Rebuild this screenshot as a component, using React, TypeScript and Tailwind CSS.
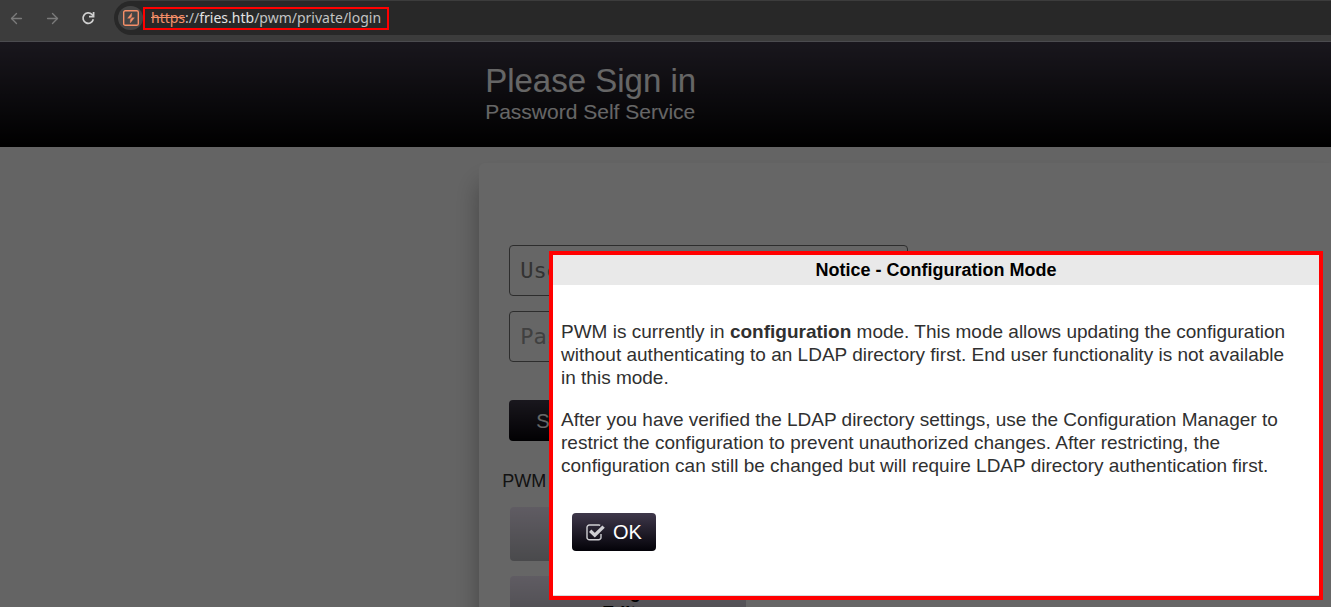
import { FaRegEdit, FaSignInAlt, FaCog } from "react-icons/fa";
import { ArrowLeft, ArrowRight } from "lucide-react";

const configLinks = [
  { label: "Configuration Manager", icon: FaCog },
  { label: "Configuration Editor", icon: FaRegEdit },
];

function BrowserBar() {
  return (
    <div className="h-[42px] bg-[#3c3c3c] border-b border-[#4b4b4f] flex items-start pl-2 pt-px">
      <div className="flex items-center h-[34px] gap-5 shrink-0">
        <button aria-label="Back" className="w-4 h-4 text-[#7b7b7b]">
          <ArrowLeft size={17} strokeWidth={1.9} />
        </button>
        <button aria-label="Forward" className="w-4 h-4 text-[#7b7b7b]">
          <ArrowRight size={17} strokeWidth={1.9} />
        </button>
        <button aria-label="Reload" className="w-4 h-4 text-[#d0d0d0]">
          <svg viewBox="0 0 16 16" className="w-4 h-4" fill="none" stroke="currentColor" strokeWidth="1.7">
            <path d="M13.3 9.2A5.2 5.2 0 1 1 11.9 4.4L13.4 6" />
            <path d="M13.6 2v4.6H9" />
          </svg>
        </button>
      </div>

      <div className="flex-1 h-[34px] ml-[18px] pl-1 rounded-l-full bg-[#282828] flex items-center">
        <button
          aria-label="View site information"
          className="w-[25px] h-6 rounded-full bg-[#444444] flex items-center justify-center shrink-0"
        >
          <svg viewBox="0 0 16 16" className="w-4 h-4" fill="none" stroke="#f58f68">
            <rect x="0.7" y="0.7" width="14.6" height="14.6" rx="1.6" strokeWidth="1.4" />
            <path
              d="M8.7 3 4.6 8.3h2.9V7.6l1.2-1.4ZM7.3 13l4.1-5.3H8.5v.7L7.3 9.8Z"
              fill="#f58f68"
              strokeWidth="0.3"
            />
          </svg>
        </button>
        <div className="h-[23px] px-[6px] pb-0.5 border-2 border-[#ff0000] flex items-center whitespace-nowrap font-['Noto_Sans',sans-serif] text-[14px] leading-[17px] text-[#c3c3c3]">
          <span className="text-[#f58f68] line-through">https</span>
          <span>://</span>
          <span className="text-[#e3e3e3]">fries.htb</span>
          <span>/pwm/private/login</span>
        </div>
      </div>
    </div>
  );
}

function CheckIcon() {
  return (
    <svg viewBox="0 0 19 17" className="w-[19px] h-[17px]" fill="none" stroke="#cfcfd3">
      <path
        d="M14.2 1.4A2.4 2.4 0 0 0 12.8 1H3.4A2.4 2.4 0 0 0 1 3.4v10A2.4 2.4 0 0 0 3.4 15.8h9.2a2.4 2.4 0 0 0 2.4-2.4V10"
        strokeWidth="1.4"
      />
      <path d="M4.2 6.8 8.8 11.2 17.6 2.6" strokeWidth="3.4" />
    </svg>
  );
}

function NoticeDialog() {
  return (
    <div
      role="dialog"
      aria-labelledby="notice-title"
      className="absolute top-[209px] right-2 w-[774px] h-[349px] border-4 border-[#ff0000] bg-white text-[#303030]"
    >
      <h2
        id="notice-title"
        className="h-[30px] bg-[#e9e9e9] text-center text-black text-lg leading-[30px] font-bold"
      >
        Notice - Configuration Mode
      </h2>
      <div className="h-[311px] border-b border-[#d5dce0] px-2 pt-[35px] text-[19px] leading-[23px]">
        <p className="mb-[19px]">
          PWM is currently in <b>configuration</b> mode. This mode allows updating the configuration
          <br />
          without authenticating to an LDAP directory first. End user functionality is not available
          <br />
          in this mode.
        </p>
        <p>
          After you have verified the LDAP directory settings, use the Configuration Manager to
          <br />
          restrict the configuration to prevent unauthorized changes. After restricting, the
          <br />
          configuration can still be changed but will require LDAP directory authentication first.
        </p>
        <button className="mt-9 ml-[11px] w-[84px] h-[38px] rounded bg-linear-to-b/srgb from-[#3f384b] to-[#030208] text-white text-xl flex items-center justify-center gap-2">
          <CheckIcon />
          OK
        </button>
      </div>
    </div>
  );
}

export default function App() {
  return (
    <div className="h-screen overflow-hidden flex flex-col font-['Liberation_Sans',Arial,sans-serif]">
      <BrowserBar />

      <div className="relative flex-1 min-h-0 overflow-hidden bg-[#fafafa]">
        {/* Header */}
        <header className="h-[105px] bg-linear-to-b/srgb from-[#403a4a] to-black text-white">
          <div className="ml-[36%] pl-1.5 pt-5">
            <h1 className="text-[33px] leading-[38px]">Please Sign in</h1>
            <p className="text-[21px] leading-6">Password Self Service</p>
          </div>
        </header>

        {/* Login panel */}
        <main className="mt-4 ml-[36%] h-[600px] pt-[82px] pl-[30px] rounded-tl-md bg-white shadow-[0_20px_24px_rgba(0,0,0,0.3)]">
          <form className="flex flex-col gap-[15px] w-[399px]">
            <input
              type="text"
              aria-label="Username"
              placeholder="Username"
              className="h-[51px] px-2.5 border border-[#707070] rounded font-['DejaVu_Sans_Mono',monospace] text-[22px] placeholder:text-[#808080]"
            />
            <input
              type="password"
              aria-label="Password"
              placeholder="Password"
              className="h-[51px] px-2.5 border border-[#707070] rounded font-['DejaVu_Sans_Mono',monospace] text-[22px] placeholder:text-[#a0a0a0]"
            />
            <button
              type="button"
              className="mt-[23px] h-[41px] w-[120px] pl-[27px] rounded bg-linear-to-b/srgb from-[#403a4a] to-[#050308] text-white text-xl flex items-center gap-2"
            >
              Sign in
              <FaSignInAlt />
            </button>
          </form>

          <p className="mt-[30px] -ml-[7px] text-lg leading-[21px] text-[#303030]">
            PWM is in configuration mode.
          </p>
          <div className="mt-[15px] ml-px flex flex-col gap-[15px]">
            {configLinks.map(({ label, icon: Icon }) => (
              <a
                key={label}
                href="#"
                className="w-[236px] h-[54px] rounded bg-linear-to-b/srgb from-[#efe6f7] to-[#b8b8be] text-black text-lg leading-[21px] font-bold flex flex-col items-center justify-center"
              >
                <span className="flex items-center gap-[13px]">
                  <Icon size={16} className="text-[#777]" />
                  {label.split(" ")[0]}
                </span>
                <span>{label.split(" ")[1]}</span>
              </a>
            ))}
          </div>
        </main>

        <div className="absolute inset-0 bg-black/60" />
        <NoticeDialog />
      </div>
    </div>
  );
}
